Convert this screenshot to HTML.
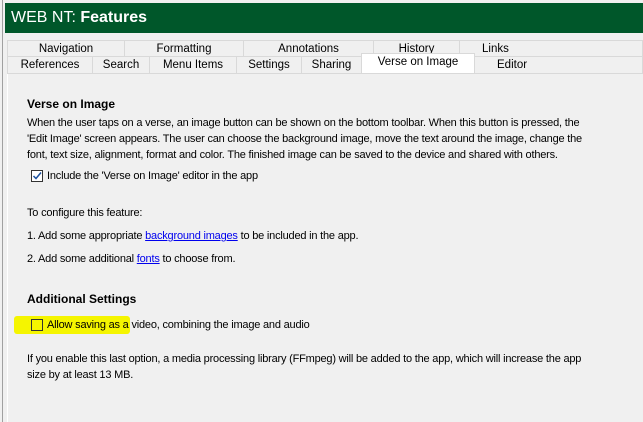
<!DOCTYPE html>
<html><head><style>
body{margin:0;width:643px;height:422px;background:#f0f0f0;font-family:"Liberation Sans",sans-serif;font-size:11px;color:#000;position:relative;overflow:hidden}
.a{position:absolute;white-space:nowrap}
.p{letter-spacing:-0.2px}
.t{position:absolute;height:16px;border:1px solid #d9d9d9;border-bottom:none;background:#f0f0f0;text-align:center;line-height:16px;box-sizing:border-box;font-size:11.5px}
a{color:#0000ee;text-decoration:underline}
</style></head><body>
<div class="a" style="left:2px;top:0;width:1px;height:422px;background:#a0a0a0"></div>
<div class="a" style="left:5px;top:3px;width:638px;height:30px;background:#00572a;color:#fff;font-size:16px;line-height:30px;padding-left:6px">WEB NT: <b>Features</b></div>
<div class="t" style="left:7px;top:40px;width:118px">Navigation</div>
<div class="t" style="left:124px;top:40px;width:120px">Formatting</div>
<div class="t" style="left:243px;top:40px;width:131px">Annotations</div>
<div class="t" style="left:373px;top:40px;width:87px">History</div>
<div class="t" style="left:459px;top:40px;width:184px;text-align:left;padding-left:22px">Links</div>
<div class="t" style="left:7px;top:56px;width:86px;height:17px">References</div>
<div class="t" style="left:92px;top:56px;width:58px;height:17px">Search</div>
<div class="t" style="left:149px;top:56px;width:88px;height:17px">Menu Items</div>
<div class="t" style="left:236px;top:56px;width:66px;height:17px">Settings</div>
<div class="t" style="left:301px;top:56px;width:61px;height:17px">Sharing</div>
<div class="t" style="left:474px;top:56px;width:169px;height:17px;text-align:left;padding-left:22px">Editor</div>
<div class="t" style="left:361px;top:53px;width:114px;height:21px;background:#fff;line-height:16px">Verse on Image</div>
<div class="a" style="left:7px;top:73px;width:636px;height:1px;background:#d9d9d9"></div>
<div class="a" style="left:7px;top:74px;width:636px;height:348px;background:#f0f0f0;border-left:1px solid #fff"></div>
<div class="a" style="left:27px;top:97px;font-weight:bold;font-size:12px">Verse on Image</div>
<div class="a p" style="left:27px;top:115px;line-height:16px">When the user taps on a verse, an image button can be shown on the bottom toolbar. When this button is pressed, the<br>'Edit Image' screen appears. The user can choose the background image, move the text around the image, change the<br>font, text size, alignment, format and color. The finished image can be saved to the device and shared with others.</div>
<div class="a" style="left:31px;top:170px;width:12px;height:12px;border:1px solid #333;background:#fff;box-sizing:border-box"><svg width="10" height="10" style="position:absolute;left:0;top:0"><path d="M1.5 5 L4 7.5 L9 1.5" stroke="#1a4f9f" stroke-width="1.5" fill="none"/></svg></div>
<div class="a p" style="left:47px;top:170px">Include the 'Verse on Image' editor in the app</div>
<div class="a p" style="left:27px;top:207px">To configure this feature:</div>
<div class="a p" style="left:27px;top:230px">1. Add some appropriate <a>background images</a> to be included in the app.</div>
<div class="a p" style="left:27px;top:253px">2. Add some additional <a>fonts</a> to choose from.</div>
<div class="a" style="left:27px;top:292px;font-weight:bold;font-size:12px">Additional Settings</div>
<div class="a" style="left:14px;top:316px;width:116px;height:18px;background:#f5f500;border-radius:3px"></div>
<div class="a" style="left:31px;top:319px;width:12px;height:12px;border:1px solid #333;box-sizing:border-box"></div>
<div class="a p" style="left:47px;top:319px">Allow saving as a video, combining the image and audio</div>
<div class="a p" style="left:27px;top:351px;line-height:16px">If you enable this last option, a media processing library (FFmpeg) will be added to the app, which will increase the app<br>size by at least 13 MB.</div>
</body></html>
